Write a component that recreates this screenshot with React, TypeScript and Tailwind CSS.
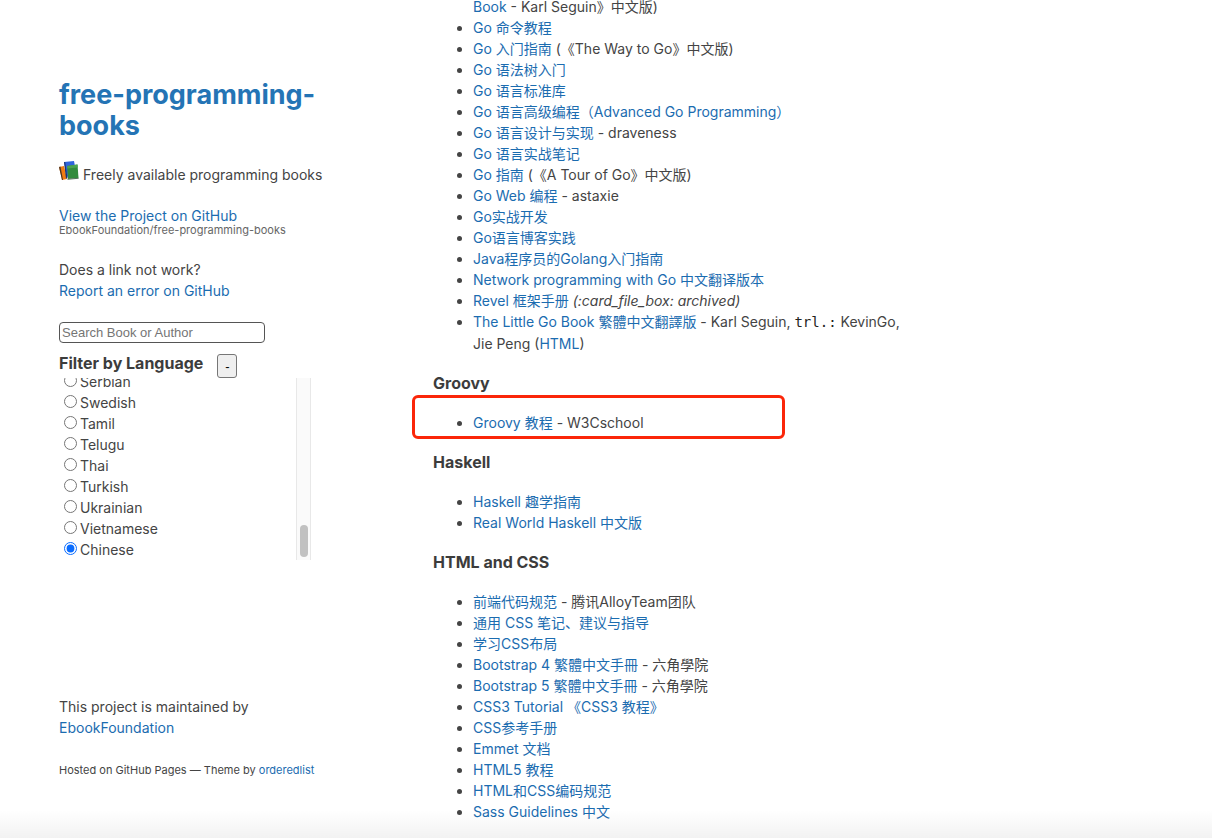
import React, { useState } from "react";

interface Book {
  title: string;
  note?: React.ReactNode;
}

const goBooks: Book[] = [
  { title: "Go 命令教程" },
  { title: "Go 入门指南", note: " (《The Way to Go》中文版)" },
  { title: "Go 语法树入门" },
  { title: "Go 语言标准库" },
  { title: "Go 语言高级编程（Advanced Go Programming）" },
  { title: "Go 语言设计与实现", note: " - draveness" },
  { title: "Go 语言实战笔记" },
  { title: "Go 指南", note: " (《A Tour of Go》中文版)" },
  { title: "Go Web 编程", note: " - astaxie" },
  { title: "Go实战开发" },
  { title: "Go语言博客实践" },
  { title: "Java程序员的Golang入门指南" },
  { title: "Network programming with Go 中文翻译版本" },
  { title: "Revel 框架手册", note: <em> (:card_file_box: archived)</em> },
  {
    title: "The Little Go Book 繁體中文翻譯版",
    note: (
      <>
        {" - Karl Seguin, "}
        <code className="font-['DejaVu_Sans_Mono',monospace] text-[14px] text-[#222]">
          trl.:
        </code>
        {" KevinGo, Jie Peng ("}
        <Link>HTML</Link>)
      </>
    ),
  },
];

const haskellBooks: Book[] = [
  { title: "Haskell 趣学指南" },
  { title: "Real World Haskell 中文版" },
];

const htmlBooks: Book[] = [
  { title: "前端代码规范", note: " - 腾讯AlloyTeam团队" },
  { title: "通用 CSS 笔记、建议与指导" },
  { title: "学习CSS布局" },
  { title: "Bootstrap 4 繁體中文手冊", note: " - 六角學院" },
  { title: "Bootstrap 5 繁體中文手冊", note: " - 六角學院" },
  { title: "CSS3 Tutorial 《CSS3 教程》" },
  { title: "CSS参考手册" },
  { title: "Emmet 文档" },
  { title: "HTML5 教程" },
  { title: "HTML和CSS编码规范" },
  { title: "Sass Guidelines 中文" },
];

const languages = [
  "Serbian",
  "Swedish",
  "Tamil",
  "Telugu",
  "Thai",
  "Turkish",
  "Ukrainian",
  "Vietnamese",
  "Chinese",
];

function Link({ children }: { children: React.ReactNode }) {
  return (
    <a href="#" className="text-[#1b6cb0] hover:underline">
      {children}
    </a>
  );
}

const BookItem = ({ title, note }: Book) => (
  <li>
    <Link>{title}</Link>
    {note}
  </li>
);

const Heading = ({ children }: { children: React.ReactNode }) => (
  <h3 className="my-5 text-base leading-[18px] font-bold text-[#3c3c3c]">
    {children}
  </h3>
);

const BooksIcon = () => (
  <svg width="20" height="20" viewBox="0 0 20 20" className="mb-1 shrink-0">
    <path d="M0 6l5-1 3 13-5 1z" fill="#f07c12" />
    <path d="M0 6l1.500-.5L4 19 3 19z" fill="#4a3526" />
    <path d="M5 1l10-1 2 11-9 5z" fill="#2f64dc" />
    <path d="M5 1l1.200 0 2.300 16-1.500.5z" fill="#1b3474" />
    <path d="M8 5l10.500-1.500 1 13.500-10.500 1z" fill="#328b3d" />
    <path d="M8 5l10.500-1.500.2 3-10.500 1z" fill="#4aa350" />
    <path d="M8 17.800l11.500-1 .2 1-11 1z" fill="#55705a" />
  </svg>
);

const LanguageFilter = () => {
  const [selected, setSelected] = useState("Chinese");
  const [open, setOpen] = useState(true);

  return (
    <div className="mt-[11px]">
      <div className="flex h-6 gap-3.5">
        <h3 className="text-base leading-[18px] font-bold text-[#3c3c3c]">
          Filter by Language
        </h3>
        <button
          type="button"
          onClick={() => setOpen(!open)}
          className="h-6 w-5 rounded-[3px] border border-[#767676] bg-[#efefef] font-['Liberation_Sans',sans-serif] text-[13px] text-black"
        >
          {open ? "-" : "+"}
        </button>
      </div>
      {open && (
        <div className="flex h-[182px] w-[252px]">
          <div className="flex flex-1 flex-col justify-end overflow-hidden">
            {languages.map((language) => (
              <label key={language} className="flex h-[21px] shrink-0 gap-[3px] pl-[5px]">
                <input
                  type="radio"
                  name="language"
                  value={language}
                  checked={selected === language}
                  onChange={() => setSelected(language)}
                  className="mt-[3px] h-[13px] w-[13px] accent-[#0a6cff]"
                />
                {language}
              </label>
            ))}
          </div>
          <div className="flex w-[15px] flex-col items-center justify-end border-x border-[#e8e8e8] bg-[#fafafa] pb-[3px]">
            <div className="h-8 w-2 rounded-full bg-[#c1c1c1]" />
          </div>
        </div>
      )}
    </div>
  );
};

const Sidebar = () => (
  <header className="flex w-[270px] shrink-0 flex-col pt-[79px] pb-[57px]">
    <h1 className="text-[27px] leading-[31px] font-bold text-[#2474b5]">
      free-programming-books
    </h1>
    <p className="mt-5 flex items-end gap-1">
      <BooksIcon />
      Freely available programming books
    </p>
    <p className="mt-5 flex flex-col">
      <Link>View the Project on GitHub</Link>
      <small className="-mt-[5px] text-[11px] leading-[18px] text-[#666]">
        EbookFoundation/free-programming-books
      </small>
    </p>
    <p className="mt-5 flex flex-col">
      Does a link not work?
      <Link>Report an error on GitHub</Link>
    </p>
    <input
      type="text"
      aria-label="Search Book or Author"
      placeholder="Search Book or Author"
      className="mt-[21px] h-[21px] w-[206px] rounded border border-[#555] px-0.5 font-['Liberation_Sans',sans-serif] text-[13px] placeholder:text-[#757575]"
    />
    <LanguageFilter />
    <footer className="mt-auto">
      <p className="flex flex-col">
        This project is maintained by
        <Link>EbookFoundation</Link>
      </p>
      <p className="mt-[22px] text-[11px]">
        Hosted on GitHub Pages — Theme by <Link>orderedlist</Link>
      </p>
    </footer>
  </header>
);

export default function App() {
  return (
    <div className="relative flex min-h-screen gap-26 overflow-hidden bg-white pl-[59px] font-['Inter','Noto_Sans_CJK_SC',sans-serif] text-[14px] leading-[21px] text-[#444] [text-spacing-trim:space-all]">
      <Sidebar />
      <section className="-mt-1 max-w-[480px] min-w-0 flex-1 [&_ul]:list-disc [&_ul]:pl-10">
        <ul>
          <li className="list-none">
            <Link>Book</Link> - Karl Seguin》中文版)
          </li>
          {goBooks.map((book) => (
            <BookItem key={book.title} {...book} />
          ))}
        </ul>
        <Heading>Groovy</Heading>
        <div className="relative">
          <ul>
            <BookItem title="Groovy 教程" note=" - W3Cschool" />
          </ul>
          <div className="pointer-events-none absolute -top-[17px] -left-[21px] h-11 w-[373px] rounded-md border-3 border-[#fb2609]" />
        </div>
        <Heading>Haskell</Heading>
        <ul>
          {haskellBooks.map((book) => (
            <BookItem key={book.title} {...book} />
          ))}
        </ul>
        <Heading>HTML and CSS</Heading>
        <ul>
          {htmlBooks.map((book) => (
            <BookItem key={book.title} {...book} />
          ))}
        </ul>
      </section>
      <div className="pointer-events-none absolute inset-x-0 bottom-0 h-7 bg-linear-to-b from-transparent to-black/5" />
    </div>
  );
}
